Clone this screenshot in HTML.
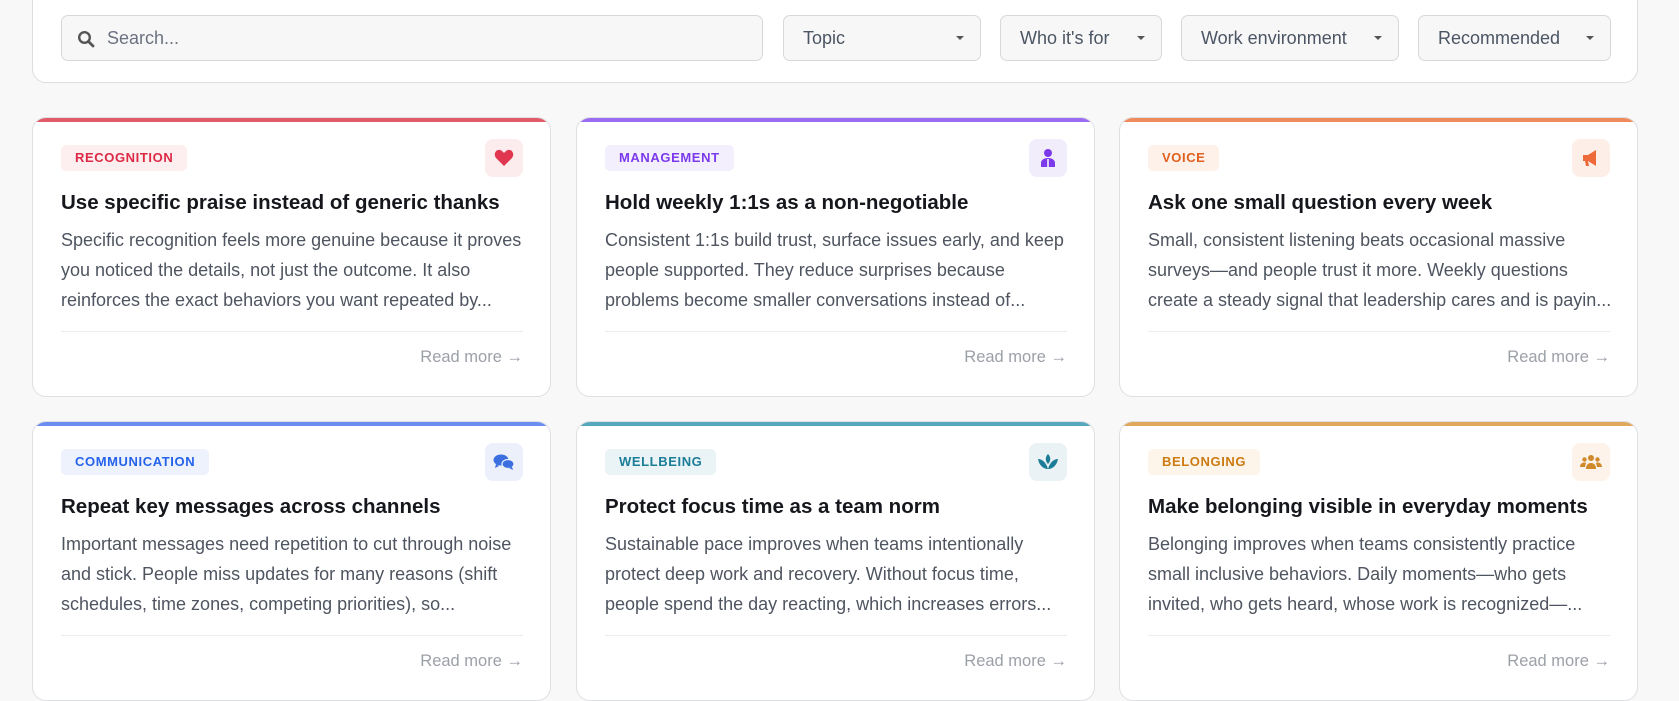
<!DOCTYPE html>
<html><head><meta charset="utf-8"><style>
*{box-sizing:border-box;margin:0;padding:0}
body{width:1679px;height:650px;overflow:hidden;background:#f8f8f9;font-family:"Liberation Sans",Arial,sans-serif;position:relative}
.panel{position:absolute;left:32px;top:-14px;width:1606px;height:97px;background:#fff;border:1px solid #dcdde0;border-radius:14px}
.inp{position:absolute;top:15px;height:46px;background:#f7f7f8;border:1px solid #d6d8dc;border-radius:7px;font-size:18px;color:#4b5563;display:flex;align-items:center}
.sel{padding-left:19px}
.sel .car{position:absolute;right:16px;top:20px;width:0;height:0;border-left:4px solid transparent;border-right:4px solid transparent;border-top:4px solid #555}
.card{position:absolute;width:519px;height:280px;background:#fff;border:1px solid #dedfe3;border-radius:14px;overflow:hidden}
.card .bar{position:absolute;left:0;top:0;right:0;height:4px}
.tag{position:absolute;left:28px;top:27px;height:26px;padding:0 14px;border-radius:5px;font-size:13px;font-weight:bold;letter-spacing:.6px;line-height:26px}
.ic{position:absolute;right:27px;top:21px;width:38px;height:38px;border-radius:8px;display:flex;align-items:center;justify-content:center}
.t{position:absolute;left:28px;top:73px;font-size:20.5px;font-weight:bold;color:#15171c;white-space:nowrap}
.d{position:absolute;left:28px;top:107px;width:464px;font-size:18px;line-height:30px;color:#4f5560}
.hr{position:absolute;left:28px;right:27px;top:213px;border-top:1px solid #ececef}
.rm{position:absolute;right:27px;top:230px;font-size:16.5px;color:#9ca0a8}
</style></head><body>
<div class="panel"></div>
<div class="inp" style="left:61px;width:702px;padding-left:45px;color:#6b7280">
<svg style="position:absolute;left:15px;top:14px" width="18" height="18" viewBox="0 0 18 18"><circle cx="7.5" cy="7.5" r="5.3" fill="none" stroke="#555" stroke-width="2.4"/><path d="M11.5 11.5L16 16" stroke="#555" stroke-width="2.8" stroke-linecap="round"/></svg>Search...</div>
<div class="inp sel" style="left:783px;width:198px">Topic<span class="car"></span></div>
<div class="inp sel" style="left:1000px;width:162px">Who it's for<span class="car"></span></div>
<div class="inp sel" style="left:1181px;width:218px">Work environment<span class="car"></span></div>
<div class="inp sel" style="left:1418px;width:193px">Recommended<span class="car"></span></div>

<div class="card" style="left:32px;top:117px"><div class="bar" style="background:#e05a69"></div>
<div class="tag" style="background:#fdeef0;color:#dc2a45">RECOGNITION</div>
<div class="ic" style="background:#fdecee"><svg width="20" height="18" viewBox="0 0 20 18"><path d="M10 17L2 9C-1 5 2 0 6 1c2 .5 3 2 4 3 1-1 2-2.5 4-3 4-1 7 4 4 8z" fill="#e0364f"/></svg></div>
<div class="t">Use specific praise instead of generic thanks</div>
<div class="d">Specific recognition feels more genuine because it proves you noticed the details, not just the outcome. It also reinforces the exact behaviors you want repeated by...</div>
<div class="hr"></div><div class="rm">Read more →</div></div>

<div class="card" style="left:576px;top:117px"><div class="bar" style="background:#9a6cf0"></div>
<div class="tag" style="background:#f3effd;color:#7c3aed">MANAGEMENT</div>
<div class="ic" style="background:#f1edfb"><svg width="18" height="20" viewBox="0 0 18 20"><circle cx="9" cy="5" r="4" fill="#7c3aed"/><path d="M2 19v-4c0-3 3-5 7-5s7 2 7 5v4z" fill="#7c3aed"/><path d="M9 11v8" stroke="#fff" stroke-width="1.5"/></svg></div>
<div class="t">Hold weekly 1:1s as a non-negotiable</div>
<div class="d">Consistent 1:1s build trust, surface issues early, and keep people supported. They reduce surprises because problems become smaller conversations instead of...</div>
<div class="hr"></div><div class="rm">Read more →</div></div>

<div class="card" style="left:1119px;top:117px"><div class="bar" style="background:#ee8a5c"></div>
<div class="tag" style="background:#fdf1ea;color:#e0601e">VOICE</div>
<div class="ic" style="background:#fdeee8"><svg width="20" height="18" viewBox="0 0 20 18"><path d="M2 6h5l8-5v16l-8-5H2z" fill="#ef6a3a"/><path d="M4 12l1 5h3l-1-5z" fill="#ef6a3a"/></svg></div>
<div class="t">Ask one small question every week</div>
<div class="d">Small, consistent listening beats occasional massive surveys—and people trust it more. Weekly questions create a steady signal that leadership cares and is payin...</div>
<div class="hr"></div><div class="rm">Read more →</div></div>

<div class="card" style="left:32px;top:421px"><div class="bar" style="background:#6a8eef"></div>
<div class="tag" style="background:#eef2fc;color:#2563eb">COMMUNICATION</div>
<div class="ic" style="background:#ecf0fb"><svg width="22" height="18" viewBox="0 0 22 18"><ellipse cx="8" cy="7" rx="7.5" ry="5.5" fill="#3b6fe0"/><path d="M3 11l-1 4 4-2z" fill="#3b6fe0"/><ellipse cx="15" cy="11" rx="6" ry="4.5" fill="#3b6fe0" stroke="#ecf0fb" stroke-width="1.2"/><path d="M19 14l1 3-4-2z" fill="#3b6fe0"/></svg></div>
<div class="t">Repeat key messages across channels</div>
<div class="d">Important messages need repetition to cut through noise and stick. People miss updates for many reasons (shift schedules, time zones, competing priorities), so...</div>
<div class="hr"></div><div class="rm">Read more →</div></div>

<div class="card" style="left:576px;top:421px"><div class="bar" style="background:#58a8bd"></div>
<div class="tag" style="background:#eaf3f6;color:#1b7d97">WELLBEING</div>
<div class="ic" style="background:#ebf2f5"><svg width="22" height="16" viewBox="0 0 22 16"><path d="M11 0c3 3 3 7 0 10-3-3-3-7 0-10z" fill="#1b7d97"/><path d="M1 5c4 0 8 3 10 10C6 15 2 11 1 5zM21 5c-4 0-8 3-10 10 5 0 9-4 10-10z" fill="#1b7d97"/></svg></div>
<div class="t">Protect focus time as a team norm</div>
<div class="d">Sustainable pace improves when teams intentionally protect deep work and recovery. Without focus time, people spend the day reacting, which increases errors...</div>
<div class="hr"></div><div class="rm">Read more →</div></div>

<div class="card" style="left:1119px;top:421px"><div class="bar" style="background:#dfa85a"></div>
<div class="tag" style="background:#fdf5ea;color:#cc7a12">BELONGING</div>
<div class="ic" style="background:#fdf3ea"><svg width="22" height="16" viewBox="0 0 22 16"><circle cx="11" cy="4" r="3" fill="#d08a2c"/><circle cx="4.5" cy="5.5" r="2.2" fill="#d08a2c"/><circle cx="17.5" cy="5.5" r="2.2" fill="#d08a2c"/><path d="M6 15c0-4 2-6 5-6s5 2 5 6z" fill="#d08a2c"/><path d="M0 13c0-3 2-4.5 4.5-4.5 1 0 1.5.3 1.5.3L5 13zM22 13c0-3-2-4.5-4.5-4.5-1 0-1.5.3-1.5.3L17 13z" fill="#d08a2c"/></svg></div>
<div class="t">Make belonging visible in everyday moments</div>
<div class="d">Belonging improves when teams consistently practice small inclusive behaviors. Daily moments—who gets invited, who gets heard, whose work is recognized—...</div>
<div class="hr"></div><div class="rm">Read more →</div></div>
</body></html>
